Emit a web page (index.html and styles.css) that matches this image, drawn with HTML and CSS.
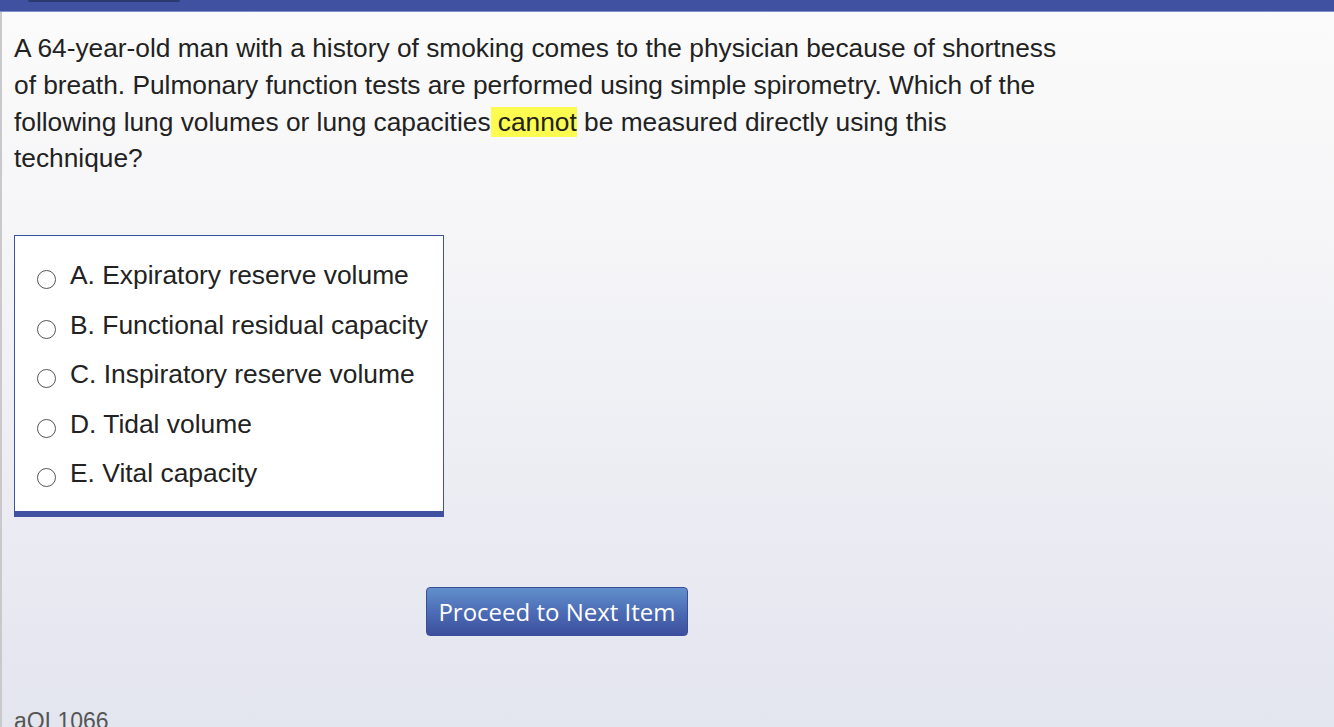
FILE: index.html
```html
<!DOCTYPE html>
<html>
<head>
<meta charset="utf-8">
<link rel="stylesheet" href="styles.css">
</head>
<body>
<div class="topbar"><div class="tab"></div></div>
<div class="page">
  <div class="content">
    <p class="stem">A 64-year-old man with a history of smoking comes to the physician because of shortness of breath. Pulmonary function tests are performed using simple spirometry. Which of the following lung volumes or lung capacities<span class="hl"> cannot</span> be measured directly using this technique?</p>
    <div class="choices">
      <div class="choice"><span class="radio"></span><span>A. Expiratory reserve volume</span></div>
      <div class="choice"><span class="radio"></span><span>B. Functional residual capacity</span></div>
      <div class="choice"><span class="radio"></span><span>C. Inspiratory reserve volume</span></div>
      <div class="choice"><span class="radio"></span><span>D. Tidal volume</span></div>
      <div class="choice"><span class="radio"></span><span>E. Vital capacity</span></div>
    </div>
    <div class="actions"><button class="next">Proceed to Next Item</button></div>
    <div class="qid">aQL1066</div>
  </div>
</div>
</body>
</html>
```
FILE: styles.css
```css
html, body {
  margin: 0;
  padding: 0;
  height: 100%;
  overflow: hidden;
}
body {
  font-family: "Liberation Sans", Arial, sans-serif;
  color: #222;
  background: linear-gradient(to bottom, #fbfbfb 0%, #f6f6f8 30%, #e3e5ef 100%);
}
.topbar {
  height: 11px;
  background: #3f51a0;
  border-bottom: 1px solid #8190c8;
  position: relative;
}
.tab {
  position: absolute;
  left: 28px;
  top: 0;
  width: 152px;
  height: 2px;
  background: #2c3870;
  border-radius: 0 0 3px 3px;
}
.page {
  border-left: 2px solid #c9c9cc;
  height: calc(100% - 12px);
}
.content {
  width: 1086px;
  padding-left: 12px;
}
.stem {
  margin: 0;
  padding-top: 18px;
  font-size: 26.3px;
  line-height: 36.8px;
  color: #222;
  width: 1060px;
}
.hl {
  background: #fbfb50;
}
.choices {
  margin-top: 58px;
  width: 428px;
  background: #fff;
  border: 1px solid #3f51a0;
  border-bottom: 6px solid #3f51a0;
  padding: 15px 0 13px 0;
  display: flex;
  flex-direction: column;
}
.choice {
  display: flex;
  align-items: center;
  height: 49.4px;
  font-size: 26.4px;
  color: #222;
}
.radio {
  width: 17px;
  height: 17px;
  border: 1.5px solid #555;
  border-radius: 50%;
  margin-left: 22px;
  margin-right: 14px;
  margin-top: 8px;
  box-sizing: content-box;
  background: #fff;
  flex: none;
}
.actions {
  display: flex;
  justify-content: center;
  margin-top: 70px;
  width: 1086px;
}
.next {
  width: 262px;
  height: 49px;
  border: 1px solid #3a4d98;
  border-radius: 4px;
  background: linear-gradient(to bottom, #6190cc 0%, #4d6db5 50%, #3c4f9e 100%);
  color: #fff;
  font-family: "Open Sans", sans-serif;
  font-size: 24px;
  padding: 0;
}
.qid {
  margin-top: 72px;
  font-size: 23px;
  color: #555;
}
```
